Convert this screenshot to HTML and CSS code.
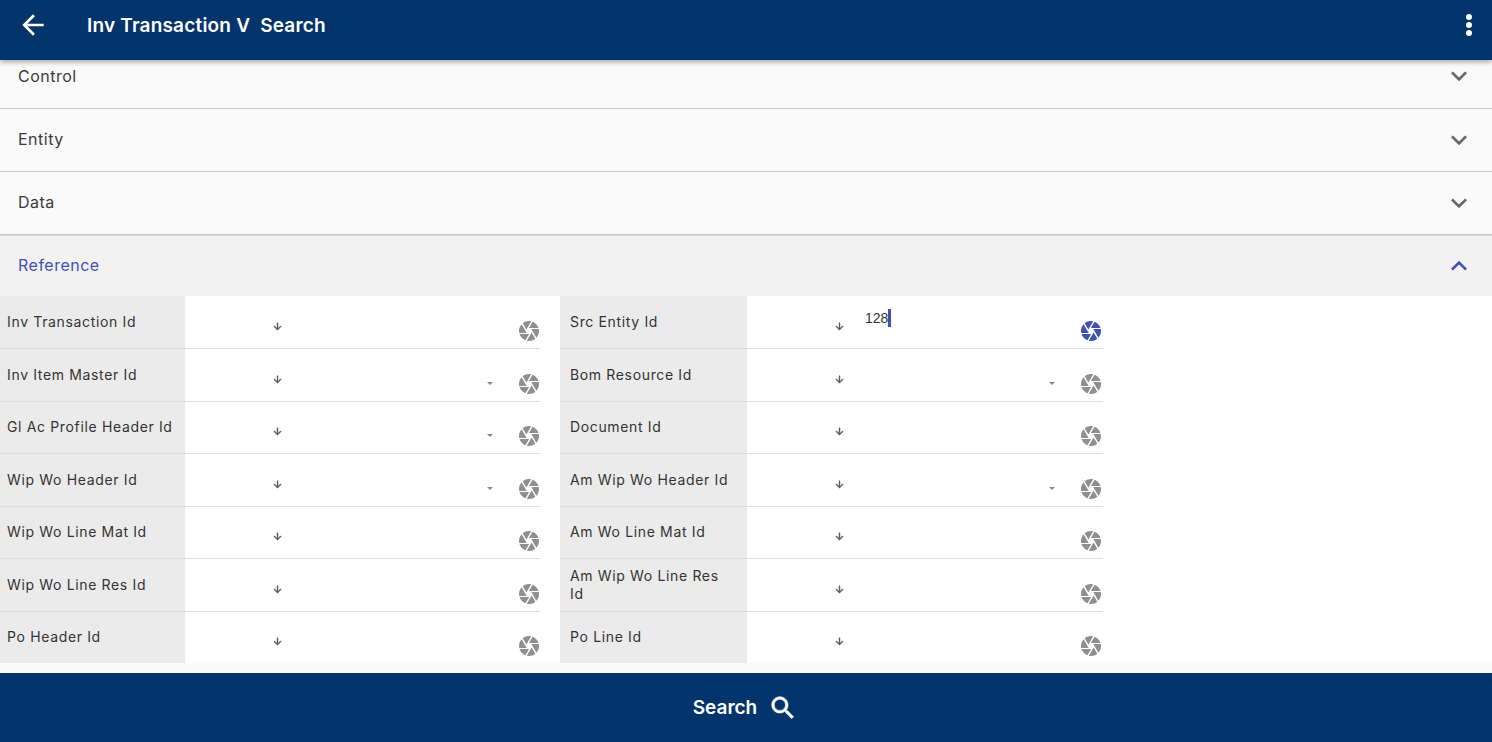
FILE: index.html
```html
<!DOCTYPE html>
<html lang="en">
<head>
    <meta charset="UTF-8">
    <title>Inv Transaction V Search</title>
    <link rel="stylesheet" href="styles.css">
</head>
<body>
<svg class="icon-defs" width="0" height="0">
    <symbol id="camera" viewBox="0 0 24 24"><path d="M9.4 10.5l4.77-8.26C13.47 2.09 12.75 2 12 2c-2.4 0-4.6.85-6.32 2.25l3.66 6.35.06-.1zM21.54 9c-.92-2.92-3.15-5.26-6-6.34L11.88 9h9.66zm.26 1h-7.49l.29.5 4.76 8.25C21 16.97 22 14.61 22 12c0-.69-.07-1.35-.2-2zM8.54 12l-3.9-6.75C3.01 7.03 2 9.39 2 12c0 .69.07 1.35.2 2h7.49l-1.15-2zm-6.08 3c.92 2.92 3.15 5.26 6 6.34L12.12 15H2.46zm11.27 0l-3.9 6.76c.7.15 1.42.24 2.17.24 2.4 0 4.6-.85 6.32-2.25l-3.66-6.35-.93 1.6z"/></symbol>
    <symbol id="down" viewBox="0 0 24 24"><path d="M20 12l-1.41-1.41L13 16.17V4h-2v12.17l-5.58-5.59L4 12l8 8 8-8z"/></symbol>
</svg>

<header class="topbar">
    <svg class="back" viewBox="0 0 24 24"><path d="M20 11H7.83l5.59-5.59L12 4l-8 8 8 8 1.41-1.41L7.83 13H20v-2z"/></svg>
    <h1>Inv Transaction V&nbsp; Search</h1>
    <div class="more"><span></span><span></span><span></span></div>
</header>

<main class="content">
    <div class="acc acc-first">
        <span>Control</span>
        <svg class="chev" viewBox="0 0 24 24"><path d="M16.59 8.59L12 13.17 7.41 8.59 6 10l6 6 6-6z"/></svg>
    </div>
    <div class="acc">
        <span>Entity</span>
        <svg class="chev" viewBox="0 0 24 24"><path d="M16.59 8.59L12 13.17 7.41 8.59 6 10l6 6 6-6z"/></svg>
    </div>
    <div class="acc">
        <span>Data</span>
        <svg class="chev" viewBox="0 0 24 24"><path d="M16.59 8.59L12 13.17 7.41 8.59 6 10l6 6 6-6z"/></svg>
    </div>
    <div class="acc acc-open">
        <span>Reference</span>
        <svg class="chev" viewBox="0 0 24 24"><path d="M12 8l-6 6 1.41 1.41L12 10.83l4.59 4.58L18 14z"/></svg>
    </div>

    <div class="form-grid">
        <div class="field">
            <label>Inv Transaction Id</label>
            <div class="input"><svg class="arrow"><use href="#down"/></svg><svg class="cam"><use href="#camera"/></svg></div>
        </div>
        <div class="field field-right">
            <label>Src Entity Id</label>
            <div class="input"><svg class="arrow"><use href="#down"/></svg><span class="value">128</span><i class="text-caret"></i><svg class="cam cam-active"><use href="#camera"/></svg></div>
        </div>

        <div class="field">
            <label>Inv Item Master Id</label>
            <div class="input"><svg class="arrow"><use href="#down"/></svg><i class="select-caret"></i><svg class="cam"><use href="#camera"/></svg></div>
        </div>
        <div class="field field-right">
            <label>Bom Resource Id</label>
            <div class="input"><svg class="arrow"><use href="#down"/></svg><i class="select-caret"></i><svg class="cam"><use href="#camera"/></svg></div>
        </div>

        <div class="field">
            <label>Gl Ac Profile Header Id</label>
            <div class="input"><svg class="arrow"><use href="#down"/></svg><i class="select-caret"></i><svg class="cam"><use href="#camera"/></svg></div>
        </div>
        <div class="field field-right">
            <label>Document Id</label>
            <div class="input"><svg class="arrow"><use href="#down"/></svg><svg class="cam"><use href="#camera"/></svg></div>
        </div>

        <div class="field">
            <label>Wip Wo Header Id</label>
            <div class="input"><svg class="arrow"><use href="#down"/></svg><i class="select-caret"></i><svg class="cam"><use href="#camera"/></svg></div>
        </div>
        <div class="field field-right">
            <label>Am Wip Wo Header Id</label>
            <div class="input"><svg class="arrow"><use href="#down"/></svg><i class="select-caret"></i><svg class="cam"><use href="#camera"/></svg></div>
        </div>

        <div class="field">
            <label>Wip Wo Line Mat Id</label>
            <div class="input"><svg class="arrow"><use href="#down"/></svg><svg class="cam"><use href="#camera"/></svg></div>
        </div>
        <div class="field field-right">
            <label>Am Wo Line Mat Id</label>
            <div class="input"><svg class="arrow"><use href="#down"/></svg><svg class="cam"><use href="#camera"/></svg></div>
        </div>

        <div class="field">
            <label>Wip Wo Line Res Id</label>
            <div class="input"><svg class="arrow"><use href="#down"/></svg><svg class="cam"><use href="#camera"/></svg></div>
        </div>
        <div class="field field-right">
            <label>Am Wip Wo Line Res Id</label>
            <div class="input"><svg class="arrow"><use href="#down"/></svg><svg class="cam"><use href="#camera"/></svg></div>
        </div>

        <div class="field field-last">
            <label>Po Header Id</label>
            <div class="input"><svg class="arrow"><use href="#down"/></svg><svg class="cam"><use href="#camera"/></svg></div>
        </div>
        <div class="field field-right field-last">
            <label>Po Line Id</label>
            <div class="input"><svg class="arrow"><use href="#down"/></svg><svg class="cam"><use href="#camera"/></svg></div>
        </div>
    </div>
</main>

<footer class="bottombar">
    <span>Search</span>
    <svg class="search-icon" viewBox="0 0 24 24"><path d="M15.5 14h-.79l-.28-.27C15.41 12.59 16 11.11 16 9.5 16 5.91 13.09 3 9.5 3S3 5.91 3 9.5 5.91 16 9.5 16c1.61 0 3.09-.59 4.23-1.57l.27.28v.79l5 4.99L20.49 19l-4.99-5zm-6 0C7.01 14 5 11.99 5 9.5S7.01 5 9.5 5 14 7.01 14 9.5 11.99 14 9.5 14z"/></svg>
</footer>
</body>
</html>
```

FILE: styles.css
```css
* {
    box-sizing: border-box;
}
html, body {
    height: 100%;
}
body {
    margin: 0;
    display: flex;
    flex-direction: column;
    overflow: hidden;
    background-color: #fafafa;
    font-family: Inter, "Open Sans", sans-serif;
    color: #333;
}
.icon-defs {
    position: absolute;
}

/* top bar */
.topbar {
    position: relative;
    z-index: 2;
    display: flex;
    align-items: center;
    height: 60px;
    flex-shrink: 0;
    padding: 0 0 10px 17px;
    background-color: #03346c;
    color: white;
    box-shadow: 0 2px 5px rgba(0, 0, 0, 0.35);
}
.back {
    width: 32px;
    height: 32px;
    fill: white;
}
.topbar h1 {
    flex: 1;
    margin: 0 0 0 38px;
    font-size: 19px;
    font-weight: 600;
    letter-spacing: 0.2px;
}
.more {
    display: flex;
    flex-direction: column;
    gap: 2px;
    margin-right: 20px;
}
.more span {
    width: 6px;
    height: 6px;
    border-radius: 50%;
    background-color: white;
}

/* accordion */
.content {
    flex: 1;
}
.acc {
    display: flex;
    align-items: center;
    justify-content: space-between;
    height: 63px;
    padding: 0 17px 0 18px;
    background-color: #fafafa;
    border-bottom: 1px solid #c8c8c8;
    font-size: 16px;
    letter-spacing: 0.5px;
    color: #3a3a3a;
}
.acc span {
    margin-bottom: 2px;
}
.acc-first {
    height: 49px;
    padding-bottom: 16px;
}
.acc-first span {
    margin-bottom: 0;
}
.acc-open {
    height: 61px;
    background-color: #f2f2f2;
    border-top: 1px solid #dcdcdc;
    border-bottom: none;
    color: #3f51b5;
}
.chev {
    width: 32px;
    height: 32px;
    fill: #666;
}
.acc-open .chev {
    fill: #3f51b5;
}

/* form */
.form-grid {
    display: grid;
    grid-template-columns: 560px 563px;
    grid-template-rows: 53px repeat(5, 52.5px) 51.5px;
    background-color: white;
}
.field {
    display: flex;
    margin-right: 20px;
    border-bottom: 1px solid #dedede;
}
.field-last {
    border-bottom: none;
}
.field label {
    display: flex;
    align-items: center;
    width: 185px;
    padding: 0 7px;
    background-color: #ebebeb;
    font-size: 14px;
    line-height: 18px;
    letter-spacing: 0.65px;
    color: #333;
}
.field-right label {
    width: 187px;
    padding-left: 10px;
    padding-right: 16px;
}
.input {
    flex: 1;
    display: flex;
    align-items: flex-start;
    padding-left: 87px;
    font-size: 14px;
}
.arrow {
    width: 11px;
    height: 11px;
    margin-top: 24.5px;
    fill: #555;
    stroke: #555;
    stroke-width: 1px;
}
.value {
    margin: 13px 0 0 20px;
    line-height: 18px;
    font-family: "Liberation Sans", sans-serif;
    font-size: 14px;
    color: #333;
}
.text-caret {
    width: 3px;
    height: 18px;
    margin: 13px 0 0 0;
    background-color: #3f51b5;
}
.select-caret {
    width: 0;
    height: 0;
    margin: 32.5px 0 0 204px;
    border-left: 3.5px solid transparent;
    border-right: 3.5px solid transparent;
    border-top: 3.5px solid #888;
}
.cam {
    width: 24px;
    height: 24px;
    margin: 22.5px -1px 0 auto;
    fill: #8f8f8f;
}
.field-right .cam {
    margin-right: 0;
}
.cam-active {
    fill: #3f51b5;
}

/* bottom bar */
.bottombar {
    display: flex;
    align-items: center;
    justify-content: center;
    gap: 11px;
    height: 69px;
    flex-shrink: 0;
    padding-right: 1px;
    background-color: #03346c;
    color: white;
    font-size: 19px;
    font-weight: 600;
}
.search-icon {
    width: 30px;
    height: 30px;
    fill: white;
    stroke: white;
    stroke-width: 0.5px;
}
```
